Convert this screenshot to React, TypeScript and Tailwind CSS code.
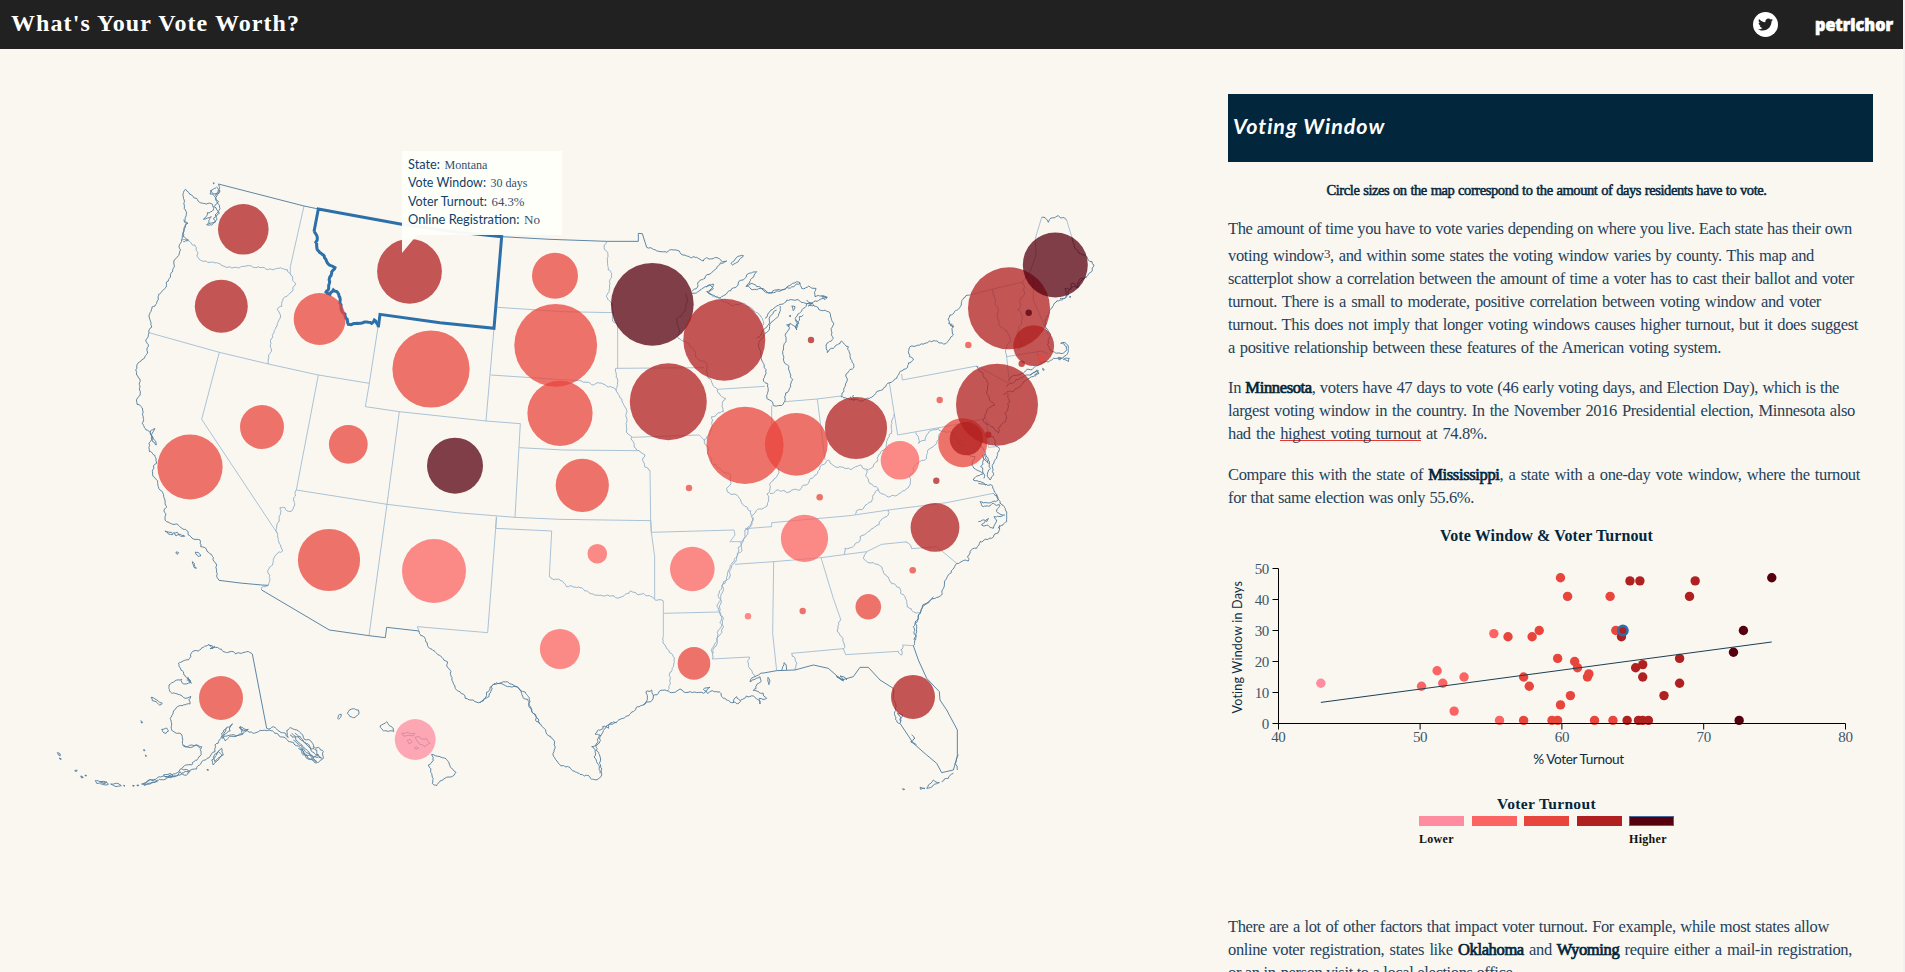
import React from "react";
import { FaTwitter } from "react-icons/fa";

const TONE = ["#ff8c9f", "#fb6462", "#e8453c", "#b02020", "#55000f"];

/* Deterministic midpoint displacement gives coastlines and rivers their grain. */
function jagged(points: string, rough: number, closed = false): string {
  const pts = points
    .trim()
    .split(/\s+/)
    .map((p) => p.split(",").map(Number));
  if (closed) pts.push(pts[0]);
  let seed = Math.round(pts[0][0] * 31 + pts[0][1] * 17) % 233280;
  const rnd = () => {
    seed = (seed * 9301 + 49297) % 233280;
    return seed / 233280 - 0.5;
  };
  const out: number[][] = [pts[0]];
  const split = (a: number[], b: number[]) => {
    const dx = b[0] - a[0];
    const dy = b[1] - a[1];
    if (Math.hypot(dx, dy) < 7) {
      out.push(b);
      return;
    }
    const k = rnd() * rough;
    const m = [(a[0] + b[0]) / 2 - dy * k, (a[1] + b[1]) / 2 + dx * k];
    split(a, m);
    split(m, b);
  };
  for (let i = 1; i < pts.length; i++) split(pts[i - 1], pts[i]);
  return "M" + out.map((p) => p[0].toFixed(1) + "," + p[1].toFixed(1)).join("L");
}

type Sheet = {
  x: number;
  y: number;
  straight?: string[];
  rivers?: string[];
  coast?: string[];
  islands?: string[];
  edge?: string[];
};

/* Map sheets; each is drawn on a grid three times finer than the page. */
const SHEETS: Sheet[] = [
  {
    x: 40,
    y: 160,
    edge: ["535,72 792,138 835,147"],
    straight: [
      "792,138 751,320 751,341",
      "327,518 538,577 685,612 835,645 988,670",
      "538,577 485,778 712,1120",
      "835,645 769,990",
      "988,670 1015,495",
      "988,670 976,740 1078,755 1338,783 1441,791 1425,1072",
      "1078,755 1041,1033 987,1427",
      "769,990 1041,1033 1250,1058 1425,1072",
      "1362,505 1338,783",
    ],
    rivers: [
      "425,240 450,245 465,255 472,290 485,302 510,307 530,308 550,318 590,322 620,318 655,320 700,330 751,341",
      "751,341 767,370 745,405 728,422 712,450 722,468 712,490 685,612",
      "769,990 760,1045 750,1055 735,1043 720,1043 718,1080 712,1120 717,1150 728,1173 705,1188 697,1215 683,1232 690,1260 685,1275 665,1282 665,1290",
    ],
    coast: [
      "535,72 537,100 528,118 540,145 525,165 530,180 515,195 500,195 514,170 490,178 502,158 520,150 518,133 500,132 470,115 455,105 437,88 430,110 436,150 433,185 440,190 432,215 425,240 418,280 400,325 375,385 350,430 330,458 332,485 327,518 325,560 315,590 290,618 287,630 300,660 301,695 291,733 310,775 313,803 335,825 327,850 328,875 347,893 350,910 338,930 340,950 355,980 375,1020 381,1040 375,1075",
      "535,90 524,110 536,125 522,140 538,160 520,175 528,185 505,192",
      "530,80 540,95 520,102 512,92 528,84",
      "513,90 510,102 522,106",
      "335,825 345,806 332,812 340,835 349,855 338,845 333,825",
      "430,180 444,190 434,205 430,230 445,240 430,245",
    ],
    islands: ["520,68 523,70 521,72"],
  },
  {
    x: 40,
    y: 500,
    edge: ["537,241 600,249 665,255 685,256", "665,270 868,390 987,407 1036,413 1040,382 1137,393", "680,685 637,462"],
    straight: ["1137,393 1132,380 1343,398 1367,85 1369,50"],
    coast: [
      "375,55 380,65 410,72 437,88 445,105 460,117 480,120 482,140 500,150 520,172 530,195 530,230 537,241",
      "1137,393 1155,415 1190,460 1222,485 1233,515 1240,550 1260,575 1300,600 1320,607 1335,595 1350,562 1378,550 1425,558 1445,580 1468,605 1485,645 1500,673",
      "637,462 620,455 605,460 570,455 545,448 520,442 505,434 490,442 455,458 445,480 415,490 430,515 450,548 430,552 425,538 387,555 397,580 430,592 452,588 450,612 412,620 390,655 395,690 425,705 430,738 455,735 485,740 475,775 455,795 420,808 400,822 370,828 340,842 310,852 345,848 375,838 410,828 445,815 485,785 525,755 525,735 545,700 560,682 578,672",
      "578,672 552,705 555,722 590,708 608,702 598,682 615,692 640,700 655,695 680,692 705,700 740,718 765,735 790,765 825,788 850,775 850,755 835,742 820,742 790,712 752,683 740,692 745,712 720,695 700,680 680,685",
      "560,685 548,715 575,705 600,705 625,688 600,680 610,695",
      "750,705 775,728 800,750 825,770 845,775 830,750 800,735 775,710 755,700",
      "760,720 785,740 790,760 815,765 830,785 800,775 775,745",
      "765,700 790,725 812,745 835,765 818,775 790,745",
      "425,808 450,815 440,825 420,815 405,830 385,825",
      "440,540 454,550 444,532 452,545",
      "505,434 520,444 510,446 525,438",
      "430,735 445,742 470,735 482,745",
    ],
    islands: [
      "545,745 550,765 535,780 520,795 515,780 530,765 538,750",
      "535,755 545,768 525,785 520,772",
      "333,592 345,597 355,603 367,610 358,615 348,605 337,602",
      "365,688 380,684 386,693 378,700 368,695",
      "303,662 308,668 304,669",
      "312,748 315,752 311,752",
      "316,765 320,768 317,769",
      "52,758 60,761 61,767 55,765",
      "58,774 64,777 60,778",
      "104,812 112,811 108,815",
      "122,828 130,832 125,834",
      "135,825 140,827 136,828",
      "166,842 180,845 200,848 205,853 185,852 170,850",
      "180,845 190,851 200,846",
      "212,852 230,850 244,857 232,859 218,855",
      "251,856 255,857 252,859",
      "278,856 283,857 279,859",
      "291,855 297,856 292,858",
      "305,852 325,843 345,838 352,845 330,852 312,856",
      "370,825 392,820 400,828 380,832",
      "501,808 506,810 502,811",
      "375,93 385,96 395,97 398,104 385,102",
      "400,99 412,97 418,104 408,108",
      "418,103 432,106 434,109 422,109",
      "408,156 416,158 411,163",
      "466,156 474,157 482,168 475,170 468,163",
      "457,185 463,190 469,205 462,202",
      "922,640 928,630 940,626 955,630 956,643 945,652 930,650",
      "893,655 895,646 904,643 902,652 896,658",
      "1020,678 1030,672 1040,665 1048,677 1060,685 1061,695 1045,694 1030,692",
      "1085,700 1100,697 1125,700 1120,708 1100,707 1090,708",
      "1101,722 1110,718 1116,726 1107,731",
      "1125,712 1138,710 1145,717 1160,716 1170,730 1155,740 1138,732 1130,722",
      "1123,743 1130,740 1136,745 1128,748",
      "1175,763 1200,770 1225,785 1230,800 1248,817 1215,835 1190,857 1177,850 1175,820 1165,795 1180,782",
    ],
  },
  {
    x: 350,
    y: 140,
    edge: ["455,290 600,298 770,304 865,304 865,280 877,281 890,322"],
    straight: [
      "442,502 640,515 787,518",
      "422,705 620,718 690,722",
      "797,685 1062,683",
      "508,923 640,930 862,932",
      "495,1132 630,1138 902,1142",
      "900,992 902,1140 904,1176",
      "845,892 1048,885 1065,903",
      "803,555 803,685",
      "1102,748 1245,739",
      "1265,797 1265,860",
    ],
    rivers: [
      "770,304 774,350 785,400 788,500 787,540 803,555",
      "690,722 730,735 760,732 800,752",
      "797,685 803,720 800,755 820,790 828,850 845,890 860,930 885,945 880,965 900,992",
      "1005,460 1003,515 980,535 985,595 1020,620 1065,665 1075,715 1102,748 1127,775 1120,815 1085,830 1085,850 1063,900 1075,945 1108,985 1138,1000 1130,1045 1165,1070 1190,1100 1205,1130",
      "1075,460 1110,475 1195,500 1225,520 1240,555",
      "1285,985 1280,1010 1260,1045 1256,1080 1240,1105 1205,1130",
    ],
    coast: [
      "890,322 930,335 970,330 1010,348 1040,352 1060,363 1070,353 1130,363 1100,385 1065,415 1025,455",
      "1025,460 1050,450 1075,435 1090,445 1075,458 1125,465 1160,440 1190,405 1220,395 1205,415 1188,440 1200,432 1220,440 1240,450 1270,458 1310,442 1350,430",
      "1068,440 1090,432 1080,450 1070,455 1082,462",
    ],
    islands: ["1143,370 1160,352 1180,347 1165,365 1148,375"],
  },
  {
    x: 740,
    y: 200,
    straight: [
      "690,285 755,268 848,246 870,215 888,165 886,115 905,52",
      "980,60 995,110",
      "485,522 487,540 710,498 803,548",
      "448,548 473,705 603,682 740,655",
      "232,597 255,780",
      "303,588 232,597 135,605",
      "800,470 905,453 925,462",
      "800,470 808,548",
      "880,230 880,300 925,405",
      "890,455 903,490",
      "740,660 745,742 770,740",
    ],
    rivers: [
      "463,642 455,700 440,730 415,765 400,800 385,810 365,797 300,800 265,780 245,795 225,825 205,850 180,870 140,878 90,880",
      "380,810 385,840 415,870 440,888 480,880 510,855 510,835 540,785 560,775 590,730 600,700",
      "415,870 395,905 345,943",
      "528,697 535,730 565,700 595,685 640,700 670,740",
      "757,268 775,360 790,385 800,470",
      "848,246 850,270 833,330 832,400 835,450",
    ],
    coast: [
      "905,52 925,67 955,47 980,60",
      "995,110 1005,145 1035,165 1045,180 1062,195 1055,215 1040,230 1025,240 1015,262 990,265 985,285 960,300 935,325 928,340 915,375 930,410 925,430 935,455 950,460 975,455 980,440 962,430 975,428 985,445 982,462 940,475 915,485 880,505 845,520 805,540",
      "1040,232 1015,245 1012,262 995,250 990,270 975,265 980,290 960,295",
      "800,560 840,535 890,510 897,520 880,530 860,540 815,575 790,583",
      "870,525 895,512 885,530",
      "803,580 808,600 800,650 775,700 765,690 730,665 735,650 765,615 740,580 740,545 730,520 710,498",
      "745,705 760,710 778,745 770,775 758,805 750,840 742,830 745,780 735,755 722,740 728,720",
      "680,760 705,770 695,795 730,820 700,840 722,845 738,855 715,850",
      "733,762 745,790 735,780 728,765 722,800 732,835",
      "738,852 755,855 770,890 800,940 800,965 775,985",
      "760,880 775,900 740,908 720,905 730,920 760,910 780,915 770,930 795,945",
      "715,965 740,965 745,955 725,975 760,985 770,960 762,950 790,945",
      "303,590 340,598 365,603 395,592 410,575 450,548 500,505 520,480 505,455 510,440 555,430 610,432 640,405 640,380 628,370 630,345 665,305 690,285",
      "75,355 90,335 125,313 160,300 200,312 240,298 260,292 245,288 225,290 228,265 185,265 180,248 140,262 95,280 60,265 20,258",
      "120,318 95,365 75,400 65,480 70,540 80,595 100,617 135,603 152,560 150,520 132,485 130,450 137,400 150,370 168,385 165,355 190,325 200,310 230,320 265,335 282,370 280,415 258,435 262,458 280,445 305,423 325,440 330,470 342,500 320,520 315,560 303,590",
      "110,330 95,345 75,385 50,415",
      "165,360 176,370 170,390 178,350 190,345",
      "625,370 640,380 630,375",
      "330,590 345,600 340,585",
      "200,300 215,312 205,318 222,316",
    ],
    islands: ["155,318 165,320 160,332", "150,345 153,348 149,350", "245,288 262,292 255,299", "970,478 988,475 985,485", "908,505 913,509 909,511", "140,375 148,373 145,380", "955,472 965,474 958,480", "990,288 993,291 989,292"],
  },
  {
    x: 480,
    y: 480,
    straight: [
      "50,112 47,145 215,153 208,290",
      "512,122 514,157 524,230 524,358",
      "514,157 762,150 765,165 750,185 785,185",
      "550,400 718,396",
      "550,363 550,470",
      "697,537 808,531",
      "765,253 881,245 1023,233 1160,215",
      "881,245 878,460 890,572",
      "1023,233 1060,355 1082,418",
      "935,520 1090,506 1097,524 1255,514",
      "1268,495 1300,497",
      "1160,215 1205,193 1275,186",
      "1295,206 1370,200 1430,250",
      "795,146 875,140 875,128 1110,107 1225,90 1400,68 1540,40",
    ],
    rivers: [
      "208,290 240,300 260,320 300,323 330,340 370,348 420,352 490,340 524,358 550,363",
      "815,110 800,145 785,185 765,235 750,265 735,310 715,350 718,395 730,440 705,490 697,537",
      "820,112 812,140 795,150 790,180 770,230 755,262 730,305 722,350 715,390 724,440 712,490 700,520",
      "550,470 583,545 570,600 563,632",
      "808,531 805,560 825,590",
      "1082,418 1078,460 1090,508",
      "1255,514 1265,525 1268,495",
      "935,520 950,550 945,570",
      "1160,215 1150,235 1180,248 1230,305 1275,350 1305,397 1320,398",
      "1275,186 1285,190 1295,206",
      "1093,222 1095,205 1140,170 1185,140 1225,105 1225,90",
    ],
    coast: [
      "0,668 35,618 60,610 108,620 150,665 175,725 217,775 222,815 242,857 300,883 348,900 365,885 358,850 348,800 375,745 405,728 430,715 490,675 520,645 515,630 498,635 502,652 490,675",
      "360,880 352,850 346,810 335,800 352,795 360,765 345,762 370,745 368,740 385,745 392,728 410,728",
      "520,648 560,632 600,627 650,638 670,640 690,622 670,628 682,640 697,632 710,635 730,655 755,668 782,664 770,650 760,668",
      "782,660 820,648 840,672 838,655 860,655 850,640 820,632 830,615 843,605 840,590 810,605 825,590 845,578",
      "905,572 912,548 920,570",
      "1070,590 1090,602 1080,588 1100,600",
      "1240,625 1243,700 1260,730 1268,705 1252,700 1262,725",
      "1295,765 1305,775 1292,785 1310,795",
      "1300,497 1300,440 1320,400 1345,365 1390,325 1405,285 1430,250 1465,243 1470,215 1500,185 1535,175 1560,135",
      "1302,480 1306,430 1315,405 1328,375 1340,372 1360,350",
      "1420,880 1405,895 1385,905",
      "1432,870 1425,850 1436,825",
    ],
    edge: [
      "945,570 1000,555 1045,565 1085,600 1120,590 1140,562 1165,562 1200,600 1240,625",
      "1260,730 1300,790 1340,825 1370,850 1385,878 1420,870 1432,830 1432,750 1400,690 1380,660 1378,635 1340,595 1315,540 1300,497",
      "845,580 890,572 945,570",
    ],
    islands: ["1345,915 1360,900 1378,908 1360,915 1340,925", "1320,922 1335,925 1322,928", "1268,926 1274,928 1270,930", "864,592 869,600 867,614", "1070,590 1085,597 1090,603"],
  },
];

const MONTANA =
  "1015,500 1003,480 995,490 975,486 960,490 925,493 915,462 903,440 893,398 880,390 870,403 858,396 868,370 870,350 885,323 868,315 850,285 830,258 832,235 822,215";

/* x, y, radius, turnout tone */
const BUBBLES: [number, number, number, number][] = [
  [243.3, 229.3, 25.3, 3], [221.3, 306.3, 26.5, 3], [319.7, 319, 26, 2], [409.5, 271.3, 32.4, 3],
  [431, 369, 38.6, 2], [262, 427, 22, 2], [348.3, 444.3, 19.4, 2], [190, 467, 32.6, 2],
  [455, 465.7, 28, 4], [329, 560, 31.1, 2], [434, 571, 32, 1], [221, 698, 22, 2],
  [415.2, 739.5, 20.4, 0], [555, 275.7, 23, 2], [555.7, 345.3, 41.4, 2], [560, 413.3, 32.6, 2],
  [582.3, 485.3, 26.6, 2], [652.3, 304.3, 41.4, 4], [724.3, 339.7, 41, 3], [668.3, 401.7, 38.5, 3],
  [745, 445.3, 38.6, 2], [689, 488, 3.2, 2], [597.3, 553.7, 9.8, 1], [560, 649, 20.1, 1],
  [692.3, 569, 22.3, 1], [694, 663.4, 16.3, 2], [748, 616.3, 3.2, 1], [802.7, 611, 3.2, 2],
  [868.3, 606.7, 12.8, 2], [913, 696.9, 22, 3], [804.5, 538.4, 23.6, 1], [819.7, 497.3, 3.3, 2],
  [935, 527.4, 24.4, 3], [912.7, 570.3, 3.3, 2], [796.3, 444.3, 31.4, 2], [856, 428, 31.1, 3],
  [811, 340, 3.2, 3], [900, 460.3, 19.3, 1], [936.3, 480.7, 3.2, 3], [939.7, 400, 3.2, 2],
  [962.7, 442.7, 24.5, 2], [966.3, 438.7, 16.6, 3], [997, 404.7, 41, 3], [988.3, 434.7, 3.2, 3],
  [968.3, 345, 3.2, 2], [1009, 308.3, 41, 3], [1028.7, 312.7, 3.2, 4], [1055.3, 265, 32.5, 4],
  [1033.7, 345.7, 20.4, 3], [1021.7, 363.7, 3.2, 3], [1041, 358, 3.2, 2],
];

/* turnout percentage, voting window in days */
const STATES: [number, number][] = [
  [43, 13], [50.1, 12], [51.2, 17], [51.6, 13], [53.1, 15], [52.4, 4], [55.2, 29], [55.6, 1],
  [56.2, 28], [57.3, 15], [57.3, 1], [57.7, 12], [57.9, 28], [58.4, 30], [59.3, 1], [59.7, 1],
  [59.7, 21], [59.9, 47], [59.9, 6], [60.4, 41], [60.6, 9], [60.9, 20], [61.1, 18], [61.8, 15],
  [61.9, 16], [62.3, 1], [63.4, 41], [63.6, 1], [63.8, 30], [64.2, 28], [64.6, 1], [64.8, 46],
  [65.2, 18], [65.4, 1], [65.5, 46], [65.7, 19], [65.7, 15], [65.7, 1], [66.1, 1], [67.2, 9],
  [68.3, 21], [68.3, 13], [69, 41], [69.4, 46], [72.1, 23], [72.5, 1], [72.8, 30], [74.8, 47],
];

const toneOf = (turnout: number) =>
  turnout < 48 ? TONE[0] : turnout < 56 ? TONE[1] : turnout < 64 ? TONE[2] : turnout < 71 ? TONE[3] : TONE[4];

function UsMap() {
  return (
    <svg className="block h-[923px] w-[1215px]" viewBox="0 49 1215 923" fill="none" strokeLinejoin="round">
      {SHEETS.map((s) => (
        <g key={s.x + "-" + s.y} transform={`translate(${s.x} ${s.y}) scale(0.33333)`}>
          <g stroke="#a0bcd2" strokeWidth="2.7">
            {s.straight?.map((p) => <polyline key={p} points={p} />)}
          </g>
          <g stroke="#8aabc6" strokeWidth="2.7">
            {s.rivers?.map((p) => <path key={p} d={jagged(p, 0.42)} />)}
          </g>
          <g stroke="#517d9d" strokeWidth="2.8">
            {s.edge?.map((p) => <polyline key={p} points={p} />)}
            {s.coast?.map((p) => <path key={p} d={jagged(p, 0.4)} />)}
            {s.islands?.map((p) => <path key={p} d={jagged(p, 0.3, true)} />)}
          </g>
        </g>
      ))}
      <g transform="translate(40 160) scale(0.33333)" stroke="#2c6fa9" strokeWidth="9" strokeLinejoin="miter">
        <polyline points="822,215 835,147 1085,193 1230,214 1385,230 1362,505 1200,488 1020,463 1015,502" />
        <path d={jagged(MONTANA, 0.35)} />
      </g>
      {BUBBLES.map(([x, y, r, t]) => (
        <circle key={x + "," + y} cx={x} cy={y} r={r} fill={TONE[t]} fillOpacity="0.75" />
      ))}
    </svg>
  );
}

function TipRow({ label, value, labelWidth, valueWidth }: { label: string; value: string; labelWidth: number; valueWidth: number }) {
  return (
    <g>
      <text y="0" textLength={labelWidth} lengthAdjust="spacingAndGlyphs" className="fill-[#0f4069] font-['Lato',sans-serif] text-[13px]">
        {label}
      </text>
      <text x={labelWidth + 4.5} y="0" textLength={valueWidth} lengthAdjust="spacingAndGlyphs" className="fill-[#33506f] font-['Liberation_Serif',serif] text-[13.5px]">
        {value}
      </text>
    </g>
  );
}

function Tooltip() {
  const rows: [string, string, number, number][] = [
    ["State:", "Montana", 32, 43],
    ["Vote Window:", "30 days", 78, 37],
    ["Voter Turnout:", "64.3%", 79, 33],
    ["Online Registration:", "No", 111.5, 16],
  ];
  return (
    <div className="absolute left-[402px] top-[102px]">
      <svg className="block h-[103px] w-[160px]" viewBox="0 0 160 103">
        <path d="M0,0H160V84H15L0,102Z" fill="#fffffa" fillOpacity="0.96" />
        {rows.map(([l, v, lw, vw], i) => (
          <g key={l} transform={`translate(6 ${18.2 + i * 18.2})`}>
            <TipRow label={l} value={v} labelWidth={lw} valueWidth={vw} />
          </g>
        ))}
      </svg>
    </div>
  );
}

function ScatterPlot() {
  const px = (v: number) => 50.3 + (v - 40) * 14.18;
  const py = (v: number) => 176.5 - v * 3.1;
  return (
    <svg className="block h-[233px] w-[645px]" viewBox="0 0 645 233" fill="none">
      {STATES.map(([t, d]) => (
        <circle key={t + "-" + d} cx={px(t)} cy={py(d)} r="4.7" fill={toneOf(t)} />
      ))}
      <circle cx={px(64.3)} cy={py(30)} r="4.6" fill={TONE[3]} stroke="#2c6fa9" strokeWidth="2.6" />
      <line x1={px(43)} y1={py(6.8)} x2={px(74.8)} y2={py(26.3)} stroke="#1c3f52" />
      <path d="M44.5,21.5H50.5V176.5M50.5,176.5H617.5V182.5M44.5,176.5H50.5V182.5" stroke="#000" />
      {[10, 20, 30, 40].map((v) => (
        <path key={v} d={`M44.5,${py(v)}h6`} stroke="#000" />
      ))}
      {[50, 60, 70].map((v) => (
        <path key={v} d={`M${px(v)},176.5v6`} stroke="#000" />
      ))}
      <g className="fill-[#3d566b] font-['Liberation_Serif',serif] text-[15px]">
        {[0, 10, 20, 30, 40, 50].map((v) => (
          <text key={v} x="41" y={py(v) + 5} textAnchor="end">{v}</text>
        ))}
        {[40, 50, 60, 70, 80].map((v) => (
          <text key={v} x={px(v)} y="194.5" textAnchor="middle">{v}</text>
        ))}
      </g>
      <g className="fill-[#0b2c42] font-['Lato',sans-serif] text-[12.5px]">
        <text x="305.2" y="217" textLength="90.5" lengthAdjust="spacingAndGlyphs">% Voter Turnout</text>
        <text transform="translate(13.5 166.5) rotate(-90)" textLength="132">Voting Window in Days</text>
      </g>
    </svg>
  );
}

function Legend() {
  return (
    <div className="mt-[12px] ml-[191px] w-[255px]">
      <h4 className="text-center text-[15.5px] leading-[23px] font-bold tracking-[0.35px] text-[#02263b]">Voter Turnout</h4>
      <div className="mt-px flex justify-between">
        <span className="h-[10px] w-[45px] bg-[#ff8c9f]" />
        <span className="h-[10px] w-[45px] bg-[#fb6462]" />
        <span className="h-[10px] w-[45px] bg-[#e8453c]" />
        <span className="h-[10px] w-[45px] bg-[#b02020]" />
        <span className="h-[10px] w-[45px] border border-[#4a6598] bg-[#55000f]" />
      </div>
      <div className="mt-[5px] flex justify-between text-[12px] leading-[16px] font-bold tracking-[0.3px] text-[#111]">
        <span>Lower</span>
        <span className="w-[45px]">Higher</span>
      </div>
      <div className="h-px" />
    </div>
  );
}

const line = "block whitespace-nowrap [text-align-last:justify]";
const strong = "font-normal text-[#02263b] [-webkit-text-stroke:0.7px_#02263b]";

export default function App() {
  return (
    <div className="h-[972px] w-[1905px] overflow-hidden border-r-2 border-[#f1f1f1] bg-[#faf7f1] font-['Liberation_Serif',serif] text-[#24415a]">
      <header className="flex h-[49px] items-center justify-between bg-[#212121] pr-[9px] pl-[11px] text-white">
        <h1 className="pb-[3px] text-[24px] font-bold tracking-[1.08px]">What's Your Vote Worth?</h1>
        <div className="flex items-center gap-[36px] pb-px">
          <span className="flex size-[25px] items-center justify-center rounded-full bg-white text-[#212121]">
            <FaTwitter size={15} />
          </span>
          <svg className="block h-[32px] w-[80px] overflow-visible" viewBox="0 0 80 32">
            <text
              x="1"
              y="22.5"
              textLength="78"
              lengthAdjust="spacingAndGlyphs"
              strokeWidth="0.7"
              className="fill-white stroke-white font-['Open_Sans',sans-serif] text-[18px] font-extrabold"
            >
              petrichor
            </text>
          </svg>
        </div>
      </header>
      <div className="flex">
        <main className="relative h-[923px] w-[1228px] shrink-0">
          <UsMap />
          <Tooltip />
        </main>
        <aside className="w-[645px] pt-[45px] text-[16.5px] leading-[23px] tracking-[-0.36px]">
          <h2 className="flex h-[68px] items-center bg-[#02263b] pl-[5px] font-['Lato',sans-serif] text-[21.5px] font-bold tracking-[0.95px] text-white italic">
            <span className="pb-[4px]">Voting Window</span>
          </h2>
          <p className="mx-auto mt-[17px] w-[440px] -translate-x-[4px] text-[14.5px] tracking-[-0.42px] text-[#02263b] [-webkit-text-stroke:0.5px_#02263b]">
            <span className={line}>Circle sizes on the map correspond to the amount of days residents have to vote.</span>
          </p>
          <p className="mt-[15px]">
            <span className={line + " w-[624px]"}>The amount of time you have to vote varies depending on where you live. Each state has their own</span>
            <span className={line + " mt-[4px] w-[586px]"}>
              voting window<span className="relative -top-[3px] text-[13px] leading-none">3</span>, and within some states the voting window varies by county. This map and
            </span>
            <span className={line + " w-[626px]"}>scatterplot show a correlation between the amount of time a voter has to cast their ballot and voter</span>
            <span className={line + " w-[593px]"}>turnout. There is a small to moderate, positive correlation between voting window and voter</span>
            <span className={line + " w-[630px]"}>turnout. This does not imply that longer voting windows causes higher turnout, but it does suggest</span>
            <span className={line + " w-[493px]"}>a positive relationship between these features of the American voting system.</span>
          </p>
          <p className="mt-[17px]">
            <span className={line + " w-[611px]"}>
              In <b className={strong}>Minnesota</b>, voters have 47 days to vote (46 early voting days, and Election Day), which is the
            </span>
            <span className={line + " w-[627px]"}>largest voting window in the country. In the November 2016 Presidential election, Minnesota also</span>
            <span className={line + " w-[259px]"}>
              had the{" "}
              <span className="bg-[linear-gradient(#e8372f,#e8372f)] bg-[length:100%_1px] bg-[position:0_16px] bg-no-repeat">highest voting turnout</span> at 74.8%.
            </span>
          </p>
          <p className="mt-[18px]">
            <span className={line + " w-[632px]"}>
              Compare this with the state of <b className={strong}>Mississippi</b>, a state with a one-day vote window, where the turnout
            </span>
            <span className={line + " w-[246px]"}>for that same election was only 55.6%.</span>
          </p>
          <h3 className="mt-[15px] -translate-x-[4px] text-center text-[16px] font-bold tracking-[0.1px] text-[#02263b]">Vote Window &amp; Voter Turnout</h3>
          <ScatterPlot />
          <Legend />
          <p className="mt-[67px]">
            <span className={line + " w-[601px]"}>There are a lot of other factors that impact voter turnout. For example, while most states allow</span>
            <span className={line + " w-[624px]"}>
              online voter registration, states like <b className={strong}>Oklahoma</b> and <b className={strong}>Wyoming</b> require either a mail-in registration,
            </span>
            <span className={line + " w-[286px]"}>or an in-person visit to a local elections office.</span>
          </p>
        </aside>
      </div>
    </div>
  );
}
